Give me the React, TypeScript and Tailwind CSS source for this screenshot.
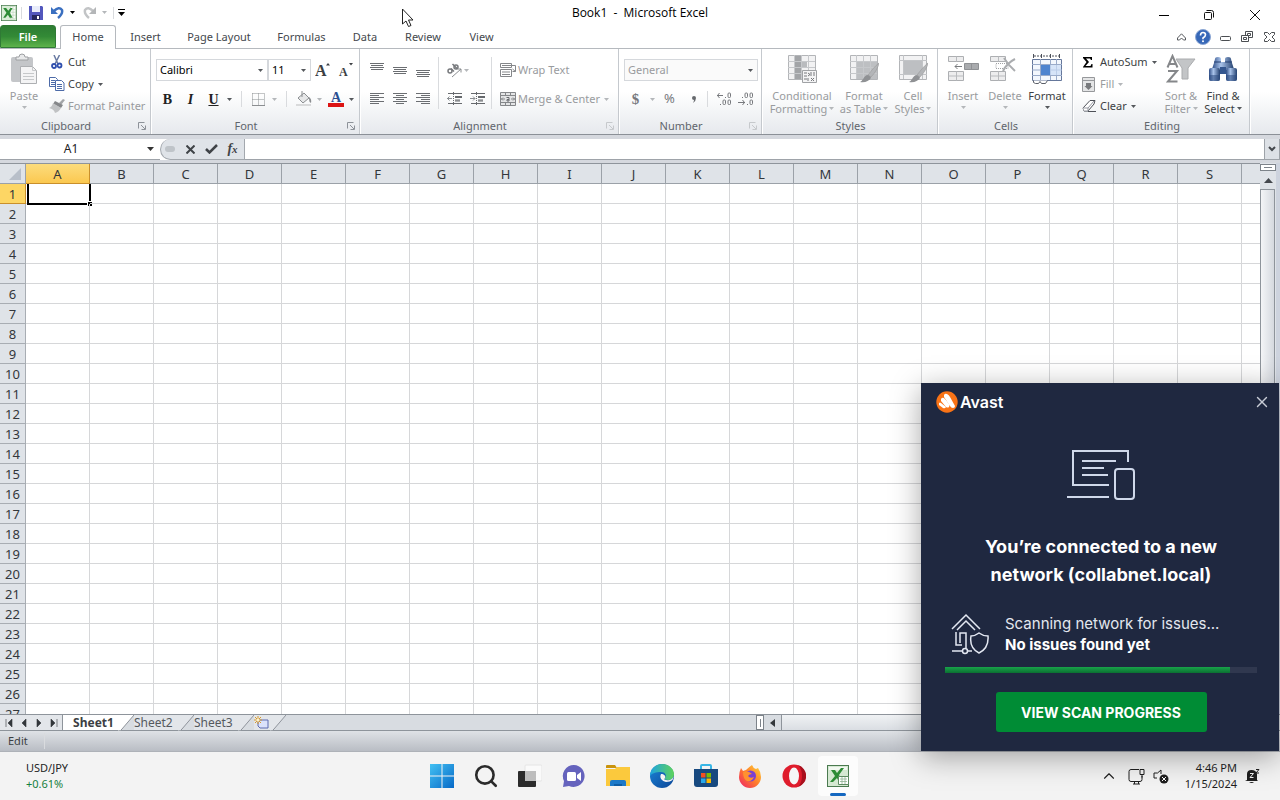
import type { ReactNode } from "react";
import { ChevronUp, Search, X } from "lucide-react";

const columns = "ABCDEFGHIJKLMNOPQRS".split("");
const rows = Array.from({ length: 27 }, (_, i) => i + 1);

function Caret({ dim = false, className = "" }: { dim?: boolean; className?: string }) {
  return (
    <svg viewBox="0 0 5 3" className={`h-[3px] w-[5px] shrink-0 ${dim ? "text-[#b4b7ba]" : "text-[#55585c]"} ${className}`}>
      <path d="M0 0h5L2.500 3z" fill="currentColor" />
    </svg>
  );
}

function Separator({ className = "h-4" }: { className?: string }) {
  return <span className={`w-px shrink-0 bg-[#d9dbde] ${className}`} />;
}

function Launcher({ dim = false }: { dim?: boolean }) {
  return (
    <svg viewBox="0 0 8 8" className={`h-2 w-2 ${dim ? "text-[#c6c9cc]" : "text-[#8d9299]"}`} fill="none" stroke="currentColor">
      <path d="M.5 6.500V.5h6M3 3l4 4M7.500 3.500v4h-4" />
    </svg>
  );
}

function Group({ label, width, launcher, dimLauncher, children }: {
  label: string;
  width: string;
  launcher?: boolean;
  dimLauncher?: boolean;
  children: ReactNode;
}) {
  return (
    <section aria-label={label} className={`flex shrink-0 flex-col border-r border-[#c5c9ce] shadow-[1px_0_0_#fff] ${width}`}>
      <div className="flex h-[69px]">{children}</div>
      <div className="flex h-4 items-center text-[11px] leading-4 text-[#5f656c]">
        <span className="flex-1 pl-0.5 text-center">{label}</span>
        {launcher ? (
          <button type="button" aria-label={`${label} settings`} className="mr-1 flex h-4 w-4 items-center justify-end">
            <Launcher dim={dimLauncher} />
          </button>
        ) : null}
      </div>
    </section>
  );
}

function LargeButton({ icon, lines, width, dim = true }: { icon: ReactNode; lines: string[]; width: string; dim?: boolean }) {
  const last = lines.length - 1;
  return (
    <button type="button" className={`flex shrink-0 flex-col items-center pt-1 text-[11px] leading-[13px] whitespace-nowrap ${width} ${dim ? "text-[#999b9e]" : "text-[#3c3f43]"}`}>
      <span className="mb-1 flex h-8 items-center">{icon}</span>
      {lines.map((line, i) => (
        <span key={line} className="flex items-center gap-0.5">
          {line}
          {last > 0 && i === last ? <Caret dim={dim} /> : null}
        </span>
      ))}
      {last === 0 ? <Caret dim={dim} className="mt-1" /> : null}
    </button>
  );
}

function SmallButton({ icon, label, dim = false, caret = false }: { icon: ReactNode; label: string; dim?: boolean; caret?: boolean }) {
  return (
    <button type="button" className={`flex h-[22px] items-center text-[11px] whitespace-nowrap ${dim ? "text-[#999b9e]" : "text-[#3c3f43]"}`}>
      <span className="flex w-[18px] shrink-0">{icon}</span>
      {label}
      {caret ? <Caret dim={dim} className="ml-1" /> : null}
    </button>
  );
}

function Tool({ label, width = "w-[23px]", children }: { label: string; width?: string; children: ReactNode }) {
  return (
    <button type="button" aria-label={label} className={`flex h-[22px] shrink-0 items-center justify-center ${width}`}>
      {children}
    </button>
  );
}

function Combo({ label, value, width, dim = false }: { label: string; value: string; width: string; dim?: boolean }) {
  return (
    <div className={`relative flex h-[22px] shrink-0 items-center ${width}`}>
      <select aria-label={label} defaultValue={value} className={`h-full w-full appearance-none border border-[#d5d8dc] pl-[3px] text-[11px] ${dim ? "bg-[#fafafa] text-[#999b9e]" : "bg-white text-black"}`}>
        <option>{value}</option>
      </select>
      <Caret className="pointer-events-none absolute right-[5px]" />
    </div>
  );
}

function Lines({ widths, align = "middle", top = 2, gap = 2 }: { widths: number[]; align?: "start" | "middle" | "end"; top?: number; gap?: number }) {
  return (
    <svg viewBox="0 0 14 14" className="h-3.5 w-3.5" fill="#6b6e72" shapeRendering="crispEdges">
      {widths.map((w, i) => (
        <rect key={i} x={align === "start" ? 0 : align === "end" ? 14 - w : (14 - w) / 2} y={top + i * gap} width={w} height="1" />
      ))}
    </svg>
  );
}

function IndentIcon({ flip = false }: { flip?: boolean }) {
  return (
    <svg viewBox="0 0 16 14" className="h-3.5 w-4" fill="none" stroke="#66696d">
      <path d="M1 1.500h14M8 4.500h7M8 5.500h7M8 8h5M8 9h5M1 11.500h14" />
      <path d={flip ? "M0 6.500h5M3 4.500l2 2-2 2" : "M5 6.500H0M2.500 4.500l-2 2 2 2"} stroke="#8b8e92" />
      <path d="M6.500 0v14" strokeDasharray="1 1" />
    </svg>
  );
}

function GridIcon({ kind }: { kind: "cond" | "table" | "cell" }) {
  return (
    <svg viewBox="0 0 30 30" className="h-[30px] w-[30px]" fill="none">
      <path d="M1.500 1.500h27v24h-27z" fill="#f2f2f3" stroke="#b3b5b8" />
      {kind === "cond" ? (
        <>
          <path d="M8 2h6v6h6v6h-6v11H8z" fill="#a2a4a7" />
          <path d="M14 8h6v5h-6z" fill="#b9bbbe" />
        </>
      ) : (
        <path d={kind === "table" ? "M8 8h20v17H8z" : "M6 7h18v13H6z"} fill="#bdbfc2" />
      )}
      {kind === "cell" ? (
        <path d="M1 6.500h28M1 20.500h28M5.500 1v24M24.500 1v24" stroke="#c2c4c7" />
      ) : (
        <path d="M1 7.500h27M1 13.500h27M1 19.500h27M7.500 1v24M14.500 1v24M21.500 1v24" stroke="#c6c8cb" />
      )}
      {kind === "cond" ? (
        <>
          <path d="M15.500 16.500h14v12h-14z" fill="#f4f4f5" stroke="#a0a2a5" />
          <path d="M17 19h3M17 22h3M17 25h3M21 19l2 1.500-2 1.500M24 18v4M27 18v4M24 24l3 3M27 24l-3 3M21 24v3" stroke="#77797c" />
        </>
      ) : (
        <>
          <path d="M30 9c-1 5-4 10-8 14l-3-2C23 16 26 12 30 9z" fill="#b3b5b8" stroke="#999" strokeWidth=".6" />
          <path d="M18 21c2 0 4 2 4 3-2 3-6 5-11 4 3-1 3-5 7-7z" fill="#8f9194" />
        </>
      )}
    </svg>
  );
}

function CellsIcon({ remove = false }: { remove?: boolean }) {
  return (
    <svg viewBox="0 0 32 30" className="h-[30px] w-8" fill="none">
      <path d="M1.500 2.500h15v5h-15zM1.500 17.500h15v9h-15z" fill="#ededee" stroke="#adafb2" />
      <path d="M9.500 2.500v5M9.500 17.500v9M1.500 22h15" stroke="#b9bbbe" />
      {remove ? (
        <>
          <path d="M7 9.500h12v5H7z" stroke="#9fa1a4" strokeDasharray="1 1" />
          <path d="M15 4q4 7 11 13M26 5Q18 9 14 17" stroke="#aaacaf" strokeWidth="2" />
        </>
      ) : (
        <>
          <path d="M17.500 9.500h14v6h-14z" fill="#a9abae" stroke="#8f9194" />
          <path d="M24.500 9.500v6" stroke="#8f9194" />
          <path d="M15 12.500H8M10.500 10L8 12.500l2.500 2.500" stroke="#797b7e" />
        </>
      )}
    </svg>
  );
}

function FormatCellsIcon() {
  return (
    <svg viewBox="0 0 32 32" className="h-8 w-8" fill="none">
      <path d="M2.500 1v4M10.500 1v4M19.500 1v4M28.500 1v4" stroke="#4b4f58" />
      <path d="M3 3h25" stroke="#4b4f58" strokeDasharray="2 1" />
      <path d="M1.500 6.500h29v21h-29z" fill="#f3f7fd" stroke="#65779b" />
      <path d="M1 11.500h30M1 22.500h30M9.500 6v21M19.500 6v21M25.500 6v21M1 17h30" stroke="#9aabc9" />
      <path d="M10 12h9v10h-9z" fill="#4e84cf" />
      <path d="M19 12h11v10H19z" fill="#c9dbf5" opacity=".7" />
      <path d="M2.500 27.500v2l2 1h3l1.500-2 1.500 2h4l2-3" stroke="#5b5f68" fill="#fff" />
    </svg>
  );
}

function Binoculars() {
  return (
    <svg viewBox="0 0 28 28" className="h-7 w-7">
      <defs>
        <linearGradient id="binocular" x1="0" x2="1">
          <stop offset="0" stopColor="#2e4d86" />
          <stop offset=".4" stopColor="#a9c3ea" />
          <stop offset="1" stopColor="#23406f" />
        </linearGradient>
      </defs>
      <path d="M6 4q0-2 3-2t3 2v3h4V4q0-2 3-2t3 2l1 4 2 6H3l2-6z" fill="url(#binocular)" />
      <path d="M11 12h6v7h-6z" fill="#34568f" />
      <rect x="0" y="13" width="11" height="13" rx="2" fill="url(#binocular)" />
      <rect x="17" y="13" width="11" height="13" rx="2" fill="url(#binocular)" />
      <path d="M0 20h11v4q0 2-2 2H2q-2 0-2-2zM17 20h11v4q0 2-2 2h-7q-2 0-2-2z" fill="#2c4a80" opacity=".55" />
      <path d="M5 7h7M16 7h7" stroke="#243f70" />
    </svg>
  );
}

function SortIcon() {
  return (
    <svg viewBox="0 0 30 30" className="h-[30px] w-[30px]" fill="none">
      <path d="M10 5h19l-7 9v11h-6V14z" fill="#c3c5c7" stroke="#aaacae" />
      <path d="M1.500 13.500L6.500 2l5 11.500M3.500 10h6" stroke="#85878a" strokeWidth="2" />
      <path d="M2 17h9L2 27.500h9.500" stroke="#85878a" strokeWidth="2" />
    </svg>
  );
}

function PasteIcon() {
  return (
    <svg viewBox="0 0 28 32" className="h-8 w-7">
      <rect x="1" y="4" width="22" height="25" rx="2" fill="#c4c6c9" />
      <path d="M6 7V4h3q0-3 3-3t3 3h3v3z" fill="#e8e9ea" stroke="#9d9fa2" />
      <path d="M10.500 13.500h12l4 4v13h-16z" fill="#f4f4f5" stroke="#adafb2" />
      <path d="M22.500 13.500v4h4M13 20.500h11M13 23.500h11M13 26.500h11" fill="none" stroke="#c6c8ca" />
    </svg>
  );
}

function CutIcon() {
  return (
    <svg viewBox="0 0 14 14" className="h-3.5 w-3.5" fill="none">
      <path d="M4 0l4 9M9.500 0L5 9" stroke="#6a7ba3" strokeWidth="1.500" />
      <circle cx="4" cy="11" r="2" stroke="#2f4fae" strokeWidth="1.800" />
      <circle cx="9.500" cy="10.500" r="2" stroke="#2f4fae" strokeWidth="1.800" />
    </svg>
  );
}

function CopyIcon() {
  return (
    <svg viewBox="0 0 16 14" className="-ml-px h-3.5 w-4" fill="#fff" stroke="#4d6ba8">
      <path d="M.5.5h6l2 2v7h-8zM2 3.500h4M2 5.500h4M2 7.500h4" />
      <path d="M6.500 3.500h6l2.500 2.500v7.500H6.500zM8 7.500h5M8 9.500h5M8 11.500h5" />
    </svg>
  );
}

function PainterIcon() {
  return (
    <svg viewBox="0 0 16 14" className="-ml-px h-3.5 w-4">
      <path d="M10 4l4-4 2 1-4 5z" fill="#a3a5a8" />
      <path d="M6 2l8 4-2 3-8-4z" fill="#85878a" />
      <path d="M4 4l8 5q-2 4-6 5-1-4-6-5 3-1 4-5z" fill="#c0c2c4" />
    </svg>
  );
}

function ExcelIcon({ className }: { className: string }) {
  return (
    <svg viewBox="0 0 22 22" className={className}>
      <rect x=".5" y=".5" width="21" height="21" fill="#d9edd6" stroke="#44784a" />
      <path d="M13 2h7v17h-7z" fill="#f8fcf7" stroke="#a3c3a2" strokeWidth=".6" />
      <path d="M13 6h7M13 10h7M13 14h7M16.500 2v17" stroke="#a3c3a2" strokeWidth=".6" />
      <path d="M3 4h4l3 4 3-4h3l-4 6.500 4 7h-4l-2.500-4L6 17.500H3l4.500-7z" fill="#2d8b35" />
    </svg>
  );
}

function NumberIcon({ up }: { up?: boolean }) {
  return (
    <svg viewBox="0 0 16 14" className="h-3.5 w-4" fill="none" stroke="#77797d">
      <path d={up ? "M1 3.500h6M3.500 1l-2 2.500 2 2.500" : "M0 10.500h7M4.500 8l2 2.500-2 2.500"} />
      <rect x="12" y={up ? 1 : 8} width="2.500" height="4.500" rx="1" />
      <rect x="7" y={up ? 8 : 1} width="2.500" height="4.500" rx="1" />
      <rect x="12" y={up ? 8 : 1} width="2.500" height="4.500" rx="1" />
      <path d={up ? "M9 5.500h1M4 12.500h1" : "M9 12.500h1M4 5.500h1"} />
    </svg>
  );
}

function TitleBar() {
  return (
    <header className="relative grid h-[25px] shrink-0 grid-cols-[1fr_auto_1fr] items-center bg-white">
      <div className="flex items-center">
        <ExcelIcon className="ml-px h-4 w-4" />
        <Separator className="ml-1 h-3 bg-[#9a9a9a]" />
        <button type="button" aria-label="Save" className="ml-[7px]">
          <svg viewBox="0 0 14 14" className="h-3.5 w-3.5">
            <path d="M0 0h13l1 1v13H0z" fill="#5257bd" />
            <path d="M3 0h8v6H3z" fill="#e8ecfa" />
            <path d="M3 9h8v5H3z" fill="#25285f" />
            <path d="M8 10h2v3H8z" fill="#fff" />
          </svg>
        </button>
        <button type="button" aria-label="Undo" className="ml-2 flex items-center gap-1.5">
          <svg viewBox="0 0 13 13" className="h-[13px] w-[13px]" fill="none">
            <path d="M3 5q5-5 8-1 1 4-4 8" stroke="#3a6fc0" strokeWidth="2.500" />
            <path d="M0 1v7h7z" fill="#3a6fc0" />
          </svg>
          <Caret className="text-black" />
        </button>
        <button type="button" aria-label="Redo" className="ml-2 flex items-center gap-1.500">
          <svg viewBox="0 0 13 13" className="mr-1.5 h-[13px] w-[13px]" fill="none">
            <path d="M10 5Q5 0 2 4q-1 4 4 8" stroke="#c2c4c6" strokeWidth="2.500" />
            <path d="M13 1v7H6z" fill="#b4b6b8" />
          </svg>
          <Caret dim />
        </button>
        <Separator className="ml-1.5 h-3 bg-[#9a9a9a]" />
        <button type="button" aria-label="Customize toolbar" className="ml-1">
          <svg viewBox="0 0 7 7" className="h-[7px] w-[7px]"><path d="M0 0h7v1H0zM0 3h7L3.500 7z" /></svg>
        </button>
      </div>
      <h1 className="font-['Open_Sans','Noto_Sans',sans-serif] text-[12px] whitespace-pre text-black">Book1  -  Microsoft Excel</h1>
      <div className="flex h-full justify-end pr-px">
        <button type="button" aria-label="Minimize" className="flex w-[45px] items-center justify-center pt-1">
          <svg viewBox="0 0 10 10" className="h-2.5 w-2.5"><path d="M0 5h10v1H0z" /></svg>
        </button>
        <button type="button" aria-label="Restore" className="flex w-[45px] items-center justify-center pt-1">
          <svg viewBox="0 0 10 10" className="h-2.5 w-2.5" fill="none" stroke="#111">
            <rect x=".5" y="2.500" width="7" height="7" rx="1" />
            <path d="M2.500.5h5q2 0 2 2v5" />
          </svg>
        </button>
        <button type="button" aria-label="Close" className="flex w-12 items-center justify-center pt-1">
          <svg viewBox="0 0 10 10" className="h-2.5 w-2.5" stroke="#111"><path d="M0 0l10 10M10 0L0 10" /></svg>
        </button>
      </div>
      <svg viewBox="0 0 12 19" className="pointer-events-none absolute top-2 left-[402px] h-[19px] w-3">
        <path d="M.5 1v15l3.500-3 2.500 5.500 2.500-1-2.500-5.500H11z" fill="#fff" stroke="#222" />
      </svg>
    </header>
  );
}

function TabRow() {
  return (
    <nav className="flex h-6 shrink-0 items-end border-b border-[#b5b9be] bg-white text-[11px] text-[#44484d]">
      <button type="button" className="h-[23px] w-14 rounded-t-[3px] border border-[#2f7a35] bg-linear-to-b from-[#2d7c33] via-[#338a36] to-[#5db34b] pt-0.5 font-semibold text-white">File</button>
      <button type="button" className="relative top-px ml-1 h-6 w-14 rounded-t-[3px] border border-b-0 border-[#b5b9be] bg-white">Home</button>
      {[
        ["Insert", "w-[59px]"], ["Page Layout", "w-[88px]"], ["Formulas", "w-[77px]"],
        ["Data", "w-[50px]"], ["Review", "w-[66px]"], ["View", "w-[51px]"],
      ].map(([name, width]) => (
        <button key={name} type="button" className={`h-[23px] pt-0.5 whitespace-nowrap ${width}`}>{name}</button>
      ))}
      <div className="ml-auto flex h-full items-center">
        <button type="button" aria-label="Collapse ribbon" className="flex w-[22px] justify-center">
          <svg viewBox="0 0 9 8" className="h-2 w-[9px]" fill="none" stroke="#55585c"><path d="M.5 5L4.500.8 8.500 5v2h-2l-2-2-2 2h-2z" /></svg>
        </button>
        <button type="button" aria-label="Help" className="flex w-[22px] justify-center">
          <svg viewBox="0 0 16 16" className="h-4 w-4">
            <circle cx="8" cy="8" r="7.500" fill="#3768b8" stroke="#8ba6d3" />
            <path d="M5.500 6.500q0-3 2.500-3t2.500 2.300Q10.500 7.500 8 9v1.200" fill="none" stroke="#fff" strokeWidth="1.600" />
            <circle cx="8" cy="12.300" r="1" fill="#fff" />
          </svg>
        </button>
        <button type="button" aria-label="Minimize workbook" className="flex w-[22px] justify-center">
          <svg viewBox="0 0 11 12" className="h-3 w-[11px]" fill="none" stroke="#4b4e52"><rect x=".5" y="5.500" width="10" height="4" rx="1" /></svg>
        </button>
        <button type="button" aria-label="Restore workbook" className="flex w-[22px] justify-center">
          <svg viewBox="0 0 12 11" className="h-[11px] w-3" fill="#fff" stroke="#4b4e52">
            <path d="M4.500.5h7v6h-7zM6.500 2.500h3v2h-3z" />
            <path d="M.5 4.500h7v6h-7zM2.500 6.500h3v2h-3z" />
          </svg>
        </button>
        <button type="button" aria-label="Close workbook" className="flex w-[22px] justify-center">
          <svg viewBox="0 0 11 10" className="h-2.5 w-[11px]" fill="none" stroke="#4b4e52">
            <path d="M.5.5h3l2 2 2-2h3v2L8 5l2.500 2.500v2h-3l-2-2-2 2h-3v-2L3 5 .5 2.500z" />
          </svg>
        </button>
      </div>
    </nav>
  );
}

function Ribbon() {
  return (
    <div className="flex h-[86px] shrink-0 overflow-hidden border-b border-[#8b9097] bg-linear-to-b from-white from-50% to-[#e6e9ed]">
      <Group label="Clipboard" width="w-[151px]" launcher>
        <LargeButton icon={<PasteIcon />} lines={["Paste"]} width="ml-0.5 w-11" />
        <div className="pt-0.5 pl-1">
          <SmallButton icon={<CutIcon />} label="Cut" />
          <SmallButton icon={<CopyIcon />} label="Copy" caret />
          <SmallButton icon={<PainterIcon />} label="Format Painter" dim />
        </div>
      </Group>

      <Group label="Font" width="w-[209px]" launcher>
        <div className="flex flex-col gap-[7px] pt-2.5 pl-[5px]">
          <div className="flex">
            <Combo label="Font name" value="Calibri" width="w-[112px]" />
            <Combo label="Font size" value="11" width="w-[43px]" />
            <Tool label="Grow font">
              <svg viewBox="0 0 16 16" className="h-4 w-4">
                <text x="0" y="14" fontSize="16" fontWeight="700" fontFamily="Liberation Serif, serif" fill="#3c3f43">A</text>
                <path d="M11 3.500h4L13 1z" fill="#3c3f43" />
              </svg>
            </Tool>
            <Tool label="Shrink font">
              <svg viewBox="0 0 16 16" className="h-4 w-4">
                <text x="1" y="14" fontSize="12" fontWeight="700" fontFamily="Liberation Serif, serif" fill="#3c3f43">A</text>
                <path d="M11 1h4l-2 2.500z" fill="#3c3f43" />
              </svg>
            </Tool>
          </div>
          <div className="flex items-center font-['Liberation_Serif',serif] text-[14px] text-[#222]">
            <Tool label="Bold"><b>B</b></Tool>
            <Tool label="Italic"><i className="font-bold">I</i></Tool>
            <Tool label="Underline"><b className="underline">U</b></Tool>
            <Tool label="Underline styles" width="w-2"><Caret /></Tool>
            <Separator className="mx-2 h-4" />
            <Tool label="Borders" width="w-4">
              <svg viewBox="0 0 13 13" className="h-[13px] w-[13px]" fill="none" stroke="#8b8e91">
                <path d="M.5.5h12v12M.5.5v12M6.500.5v12M.5 6.500h12" strokeDasharray="1 1" />
                <path d="M0 12.500h13" />
              </svg>
            </Tool>
            <Tool label="Border styles" width="w-4"><Caret dim /></Tool>
            <Separator className="ml-1 h-4" />
            <Tool label="Fill color" width="ml-2 w-[18px]">
              <svg viewBox="0 0 16 16" className="h-4 w-4">
                <path d="M2 7l6-5 5 5-6 5z" fill="#e6e7e8" stroke="#8b8e91" />
                <path d="M13 6q3 2 2 6-2-1-2-4z" fill="#8b8e91" />
                <path d="M6 0v6" stroke="#8b8e91" />
                <path d="M0 13h15v2H0z" fill="#d9dadb" />
              </svg>
            </Tool>
            <Tool label="Fill colors" width="w-3"><Caret dim /></Tool>
            <Tool label="Font color" width="ml-0.5 w-[18px]">
              <svg viewBox="0 0 16 16" className="h-4 w-4">
                <text x="3" y="11" fontSize="14" fontWeight="700" fontFamily="Liberation Serif, serif" fill="#2b4f92">A</text>
                <path d="M0 12h16v4H0z" fill="#dc1414" />
              </svg>
            </Tool>
            <Tool label="Font colors" width="w-3"><Caret /></Tool>
          </div>
        </div>
      </Group>

      <Group label="Alignment" width="w-[259px]" launcher dimLauncher>
        <div className="flex flex-col gap-[7px] pt-2.5 pl-[5px]">
          <div className="flex">
            <Tool label="Top align"><Lines widths={[14, 12, 14, 12]} top={0} /></Tool>
            <Tool label="Middle align"><Lines widths={[14, 12, 14, 12]} top={4} /></Tool>
            <Tool label="Bottom align"><Lines widths={[14, 12, 14, 12]} top={7} /></Tool>
          </div>
          <div className="flex">
            <Tool label="Align left"><Lines widths={[14, 9, 14, 9, 14, 9]} align="start" top={1} /></Tool>
            <Tool label="Center"><Lines widths={[14, 8, 14, 8, 14, 8]} top={1} /></Tool>
            <Tool label="Align right"><Lines widths={[14, 9, 14, 9, 14, 9]} align="end" top={1} /></Tool>
          </div>
        </div>
        <Separator className="mt-2 ml-1 h-[52px]" />
        <div className="flex flex-col gap-[7px] pt-2.5 pl-1">
          <Tool label="Orientation" width="w-7">
            <svg viewBox="0 0 17 17" className="h-[17px] w-[17px] shrink-0" fill="none" stroke="#77797d">
              <circle cx="4" cy="9" r="2" strokeWidth="1.500" />
              <path d="M5 6.500l3 3M6.500 2l5 5" strokeWidth="1.500" />
              <circle cx="10" cy="5" r="2" strokeWidth="1.500" />
              <path d="M6 15l9-8M11.500 7H15v3.500" stroke="#8b8e91" />
            </svg>
            <Caret dim className="ml-px" />
          </Tool>
          <div className="flex">
            <Tool label="Decrease indent"><IndentIcon /></Tool>
            <Tool label="Increase indent"><IndentIcon flip /></Tool>
          </div>
        </div>
        <Separator className="mt-2 ml-0.5 h-[52px]" />
        <div className="flex flex-col gap-[7px] pt-2.5 pl-2">
          <SmallButton
            dim
            label="Wrap Text"
            icon={
              <svg viewBox="0 0 16 16" className="h-4 w-4" fill="none" stroke="#85878a">
                <path d="M.5 1.500h11v4H.5zM.5 7.500h11v7H.5zM2 3.500h13.500v5M12.500 7l3 2.500M12.500 9.500h3V6M2 10h8M2 12.500h8" />
              </svg>
            }
          />
          <SmallButton
            dim
            caret
            label="Merge & Center"
            icon={
              <svg viewBox="0 0 16 14" className="h-3.5 w-4" fill="#e4e5e6" stroke="#85878a">
                <path d="M.5.5h15v13H.5zM.5 3.500h15M.5 10.500h15M5.500.5v3M10.500.5v3M5.500 10.500v3M10.500 10.500v3M1 7h4M11 7h4M3 5.500L1.500 7 3 8.500M13 5.500L14.500 7 13 8.500" />
                <path d="M6.500 5.500h2.500v3.500H7V7.500h2" fill="none" stroke="#66696d" />
              </svg>
            }
          />
        </div>
      </Group>

      <Group label="Number" width="w-[143px]" launcher dimLauncher>
        <div className="flex flex-col gap-[7px] pt-2.5 pl-[5px]">
          <Combo label="Number format" value="General" width="w-[134px]" dim />
          <div className="flex items-center text-[13px] text-[#77797d]">
            <Tool label="Accounting format"><b className="font-['Liberation_Serif',serif] text-[15px]">$</b></Tool>
            <Tool label="Currencies" width="w-2.5"><Caret dim /></Tool>
            <Tool label="Percent" width="w-[25px]">%</Tool>
            <Tool label="Comma style">
              <svg viewBox="0 0 4 7" className="h-[7px] w-1"><path d="M0 2q0-2 2-2t2 2q0 3-3 5Q2 5 2 4 0 4 0 2z" fill="#66696d" /></svg>
            </Tool>
            <Separator className="ml-0.5 h-4" />
            <Tool label="Increase decimal" width="ml-2 w-4"><NumberIcon up /></Tool>
            <Tool label="Decrease decimal" width="ml-1.5 w-4"><NumberIcon /></Tool>
          </div>
        </div>
      </Group>

      <Group label="Styles" width="w-[176px]">
        <LargeButton icon={<GridIcon kind="cond" />} lines={["Conditional", "Formatting"]} width="ml-[7px] w-[66px]" />
        <LargeButton icon={<GridIcon kind="table" />} lines={["Format", "as Table"]} width="w-[58px]" />
        <LargeButton icon={<GridIcon kind="cell" />} lines={["Cell", "Styles"]} width="w-10" />
      </Group>

      <Group label="Cells" width="w-[135px]">
        <LargeButton icon={<CellsIcon />} lines={["Insert"]} width="ml-1 w-[42px]" />
        <LargeButton icon={<CellsIcon remove />} lines={["Delete"]} width="w-[42px]" />
        <LargeButton icon={<FormatCellsIcon />} lines={["Format"]} width="w-[42px]" dim={false} />
      </Group>

      <Group label="Editing" width="w-[177px]">
        <div className="w-[87px] shrink-0 pt-0.5 pl-[9px]">
          <SmallButton icon={<svg viewBox="0 0 12 14" className="h-3.5 w-3"><path d="M1 2h9v3H9L8 3.500H4L7 7l-3.500 4H8.500L9.500 9h1v3.500H1V12l3.500-5L1 3z" /></svg>} label="AutoSum" caret />
          <SmallButton
            dim
            caret
            label="Fill"
            icon={
              <svg viewBox="0 0 14 15" className="h-[15px] w-3.5">
                <path d="M.5.5h12v14H.5zM.5 3.500h12" fill="#e4e5e6" stroke="#96989b" />
                <path d="M4 6h5v3h1.500l-4 4-4-4H4z" fill="#77797c" />
              </svg>
            }
          />
          <SmallButton
            caret
            label="Clear"
            icon={
              <svg viewBox="0 0 14 14" className="h-3.5 w-3.5" fill="#fff" stroke="#4d5057">
                <path d="M1 9l7-7.500h5L12 5l-6 7H2z" />
                <path d="M2 12h4V9H1M6 9l6-7" stroke="#9497a0" />
                <path d="M6 12.500h8" />
              </svg>
            }
          />
        </div>
        <LargeButton icon={<SortIcon />} lines={["Sort &", "Filter"]} width="w-[42px]" />
        <LargeButton icon={<Binoculars />} lines={["Find &", "Select"]} width="w-[42px]" dim={false} />
      </Group>
    </div>
  );
}

function FormulaBar() {
  return (
    <div className="flex h-[25px] shrink-0 border-t-4 border-[#d5d8de] bg-white">
      <div className="flex w-40 items-center border-b border-[#9ea3a9] pr-[5px]">
        <input aria-label="Name box" defaultValue="A1" className="w-full min-w-0 flex-1 pr-1 text-center text-[12px] text-[#222] outline-none" />
        <button type="button" aria-label="Names" className="p-px">
          <svg viewBox="0 0 7 4" className="h-1 w-[7px]"><path d="M0 0h7L3.500 4z" fill="#333" /></svg>
        </button>
      </div>
      <div className="flex w-[85px] items-center rounded-l-full border-r border-b border-l border-[#a3a8ae] bg-[#dfe3e8]">
        <span className="ml-1 h-1.5 w-2.5 rounded-full bg-[#bfc4c9]" />
        <button type="button" aria-label="Cancel" className="ml-[5px] flex w-[21px] justify-center">
          <svg viewBox="0 0 9 9" className="h-[9px] w-[9px]" stroke="#3f4347" strokeWidth="2"><path d="M.5.5l8 8M8.500.5l-8 8" /></svg>
        </button>
        <button type="button" aria-label="Enter" className="flex w-[21px] justify-center">
          <svg viewBox="0 0 13 10" className="h-2.5 w-[13px]" fill="none" stroke="#3f4347" strokeWidth="2.500"><path d="M1 5l3.500 3.500L12 1" /></svg>
        </button>
        <button type="button" aria-label="Insert function" className="flex w-[21px] justify-center font-['Liberation_Serif',serif] text-[14px] leading-4 font-bold text-[#3f4347] italic">
          f<span className="text-[11px]">x</span>
        </button>
      </div>
      <input aria-label="Formula" className="min-w-0 flex-1 border-b border-[#9ea3a9] px-1 text-[12px] outline-none" />
      <button type="button" aria-label="Expand formula bar" className="flex w-4 items-center justify-center border border-t-0 border-[#9ea3a9] bg-[#dde1e6]">
        <svg viewBox="0 0 8 6" className="h-1.5 w-2" fill="none" stroke="#44484d" strokeWidth="2"><path d="M1 1l3 3 3-3" /></svg>
      </button>
    </div>
  );
}

function Sheet() {
  return (
    <main className="flex min-h-0 flex-1 border-t-[3px] border-[#d5d8de] bg-white">
      <div className="min-w-0 flex-1 overflow-hidden border-t border-[#8e949b]">
        <table className="w-full table-fixed border-separate border-spacing-0 text-[#33373b]">
          <colgroup>
            <col className="w-[26px]" />
            {columns.map((c) => <col key={c} className="w-16" />)}
            <col />
          </colgroup>
          <thead>
            <tr className="h-5">
              <th className="border-r border-b border-[#9ba1a8] bg-[#dfe3e8] p-0">
                <svg viewBox="0 0 25 19" className="h-[19px] w-full"><path d="M21 4v12H9z" fill="#b8bfc9" /></svg>
              </th>
              {columns.map((c) => (
                <th key={c} scope="col" className={`border-r border-b p-0 pt-0.5 text-[13px] leading-[17px] font-normal ${c === "A" ? "border-[#c98f2b] bg-linear-to-b from-[#fcdc7c] to-[#fbc84f]" : "border-[#9ba1a8] bg-[#dfe3e8]"}`}>{c}</th>
              ))}
              <td className="border-b border-[#9ba1a8] bg-[#dfe3e8] p-0" />
            </tr>
          </thead>
          <tbody>
            {rows.map((r) => (
              <tr key={r} className="h-5">
                <th scope="row" className={`border-r border-b p-0 pt-0.5 text-[13px] leading-[17px] font-normal ${r === 1 ? "border-[#c98f2b] bg-[#fdd664]" : "border-[#a8adb3] bg-[#dfe3e8]"}`}>{r}</th>
                {columns.map((c) => (
                  <td key={c} className="relative border-r border-b border-[#d6d7d9] p-0">
                    {r === 1 && c === "A" ? (
                      <>
                        <input aria-label="Cell A1" className="absolute -inset-x-px top-0 ml-0.5 h-[21px] w-16 border-x-2 border-b-2 border-black bg-white px-px outline-none" />
                        <span className="absolute -right-[3px] -bottom-[3px] h-[5px] w-[5px] border-t border-l border-white bg-black" />
                      </>
                    ) : null}
                  </td>
                ))}
                <td className="border-b border-[#d6d7d9] p-0" />
              </tr>
            ))}
          </tbody>
        </table>
      </div>
      <div className="flex w-5 flex-col border-r-4 border-[#cdd3de] bg-[#dfe3e8]">
        <div className="mt-px flex h-[7px] items-center justify-center border border-[#7d838a] bg-white"><span className="h-px w-2 bg-[#7d838a]" /></div>
        <button type="button" aria-label="Scroll up" className="flex h-[18px] items-center justify-center">
          <svg viewBox="0 0 9 5" className="h-[5px] w-[9px]"><path d="M0 5h9L4.500 0z" fill="#44484d" /></svg>
        </button>
        <div className="mr-px flex-1 border border-[#8e949b] bg-linear-to-r from-[#f4f5f7] to-[#d5d9df]" />
        <div className="h-40" />
      </div>
    </main>
  );
}

function Slash({ active = false }: { active?: boolean }) {
  return (
    <svg viewBox="0 0 16 16" className="h-4 w-4 shrink-0">
      <path d="M0 0h16L4 14l-2 2H0z" fill={active ? "#fff" : "#e3e6ea"} />
      <path d="M16 0L4 14q-1 2-4 2" fill="none" stroke="#8e949b" />
    </svg>
  );
}

function SheetTabs() {
  return (
    <div className="flex h-[17px] shrink-0 border-y border-[#8e949b] bg-[#d8dce1]">
      <div className="flex w-[63px] shrink-0 items-center gap-px border-r border-[#8e949b] bg-[#e3e6ea] pl-0.5">
        {[
          ["First sheet", "M1 0v8M7 0v8L3 4z"], ["Previous sheet", "M6 0v8L2 4z"],
          ["Next sheet", "M2 0v8l4-4z"], ["Last sheet", "M7 0v8M1 0v8l4-4z"],
        ].map(([name, d]) => (
          <button key={name} type="button" aria-label={name} className="flex w-3.5 justify-center">
            <svg viewBox="0 0 8 8" className="h-2 w-2"><path d={d} fill="#33373b" stroke="#33373b" strokeWidth=".6" /></svg>
          </button>
        ))}
      </div>
      <button type="button" className="w-[55px] shrink-0 bg-white pl-1.5 text-[12px] leading-[15px] font-bold whitespace-nowrap text-[#3c3f43]">Sheet1</button>
      <Slash active />
      {["Sheet2", "Sheet3"].map((name) => (
        <div key={name} className="flex">
          <button type="button" className="w-11 bg-[#e3e6ea] text-left text-[12px] leading-[15px] text-[#55595e]">{name}</button>
          <Slash />
        </div>
      ))}
      <button type="button" aria-label="New sheet" className="flex w-4 shrink-0 items-center bg-[#e3e6ea]">
        <svg viewBox="0 0 15 13" className="h-[13px] w-[15px]">
          <path d="M4 4h10v8H6l-2-2z" fill="#dbe2fb" stroke="#5d6bb0" />
          <path d="M4 0v8M0 4h8M1 1l6 6M7 1L1 7" stroke="#d99a2b" />
          <circle cx="4" cy="4" r="1.500" fill="#fff3c9" />
        </svg>
      </button>
      <Slash />
      <div className="ml-auto flex w-[524px] shrink-0">
        <span className="flex w-2 items-center justify-center border border-[#7d838a] bg-white"><span className="h-2 w-px bg-[#7d838a]" /></span>
        <button type="button" aria-label="Scroll left" className="flex w-[17px] items-center justify-center">
          <svg viewBox="0 0 5 8" className="h-2 w-[5px]"><path d="M5 0v8L0 4z" fill="#33373b" /></svg>
        </button>
        <div className="mr-10 flex-1 border-x border-[#8e949b] bg-linear-to-b from-[#f0f2f4] to-[#dadee3]" />
      </div>
    </div>
  );
}

function AvastPopup() {
  return (
    <aside className="absolute right-px bottom-[49px] w-[358px] bg-[#1f2840] font-['Inter','Open_Sans',sans-serif] text-white shadow-[0_6px_28px_rgba(0,0,0,0.35)]">
      <div className="flex h-[38px] items-center pr-2 pl-[15px]">
        <svg viewBox="0 0 22 22" className="h-[22px] w-[22px]">
          <circle cx="11" cy="11" r="10.700" fill="#f97316" />
          <path d="M8 4q1-2 3-1 2 1 3 3l5 9q0 2-2 2-2 0-3-2L8 6z" fill="#fff" />
          <path d="M5 8q1-2 3-1 2 2 5 6 1 2 0 3-1 1-3 0L5 10z" fill="#fff" />
          <path d="M3 12q1-1 2 0l5 4q-1 2-3 1l-4-3z" fill="#fff" />
        </svg>
        <span className="ml-0.5 text-[16px] font-semibold">Avast</span>
        <button type="button" aria-label="Close notification" className="ml-auto text-[#c8ccd6]"><X className="h-[18px] w-[18px]" strokeWidth={1.800} /></button>
      </div>
      <svg viewBox="0 0 70 52" className="mx-auto mt-7 h-[52px] w-[70px]" fill="none" stroke="#cfd8ea" strokeWidth="2">
        <path d="M44 36H8V2h55v11M17 12h34M17 19h22M17 26h26M2 48h42" />
        <rect x="50" y="20" width="19" height="30" rx="3" />
      </svg>
      <h2 className="mt-8 pl-0.5 text-center text-[18px] leading-7 font-bold">
        You’re connected to a new
        <br />
        network (collabnet.local)
      </h2>
      <div className="mt-6 flex items-center px-[30px]">
        <svg viewBox="0 0 38 42" className="h-[42px] w-[38px] shrink-0" fill="none" stroke="#e3e8f2" strokeWidth="1.500">
          <path d="M1 16L15 2l14 14M6 17l9-9 9 9M5 19v13h6M9 30V20h6v12M15 22v13M1 38h10M17 38h4" />
          <circle cx="14" cy="38" r="2.500" />
          <path d="M28 20q4 3 9 3 1 12-9 17-10-5-8-17 4 0 8-3z" />
        </svg>
        <div className="ml-4 text-[15px] leading-[21px] whitespace-nowrap">
          <p className="text-[#e3e7ef]">Scanning network for issues...</p>
          <p className="font-bold">No issues found yet</p>
        </div>
      </div>
      <div role="progressbar" aria-label="Network scan" aria-valuenow={91} className="mr-[22px] ml-6 mt-3 h-1.5 bg-[#30384f]">
        <div className="h-full bg-linear-to-b from-[#18a44a] to-[#0b7032]" style={{ width: "91.500%" }} />
      </div>
      <div className="flex justify-center pt-[19px] pb-[19px] pl-0.5">
        <button type="button" className="h-10 w-[211px] rounded-[3px] bg-[#008c35] text-[14px] font-bold">VIEW SCAN PROGRESS</button>
      </div>
    </aside>
  );
}

function TaskIcon({ name }: { name: string }) {
  switch (name) {
    case "Start":
      return (
        <svg viewBox="0 0 24 24" className="h-6 w-6">
          <defs><linearGradient id="win" x2="1" y2="1"><stop stopColor="#43c1f3" /><stop offset="1" stopColor="#0669c7" /></linearGradient></defs>
          <path d="M0 0h11.500v11.500H0zM12.500 0H24v11.500H12.500zM0 12.500h11.500V24H0zM12.500 12.500H24V24H12.500z" fill="url(#win)" />
        </svg>
      );
    case "Search":
      return <Search className="h-[26px] w-[26px] text-[#2a2a2a]" strokeWidth={2.400} />;
    case "Task view":
      return (
        <svg viewBox="0 0 24 24" className="h-6 w-6">
          <rect x="7" y="1" width="17" height="16" rx="1" fill="#fafafa" stroke="#e4e4e4" />
          <rect y="7" width="18" height="16" rx="1" fill="#2b2b2b" />
          <path d="M7 7h11v10H7z" fill="#bdbdbd" />
        </svg>
      );
    case "Chat":
      return (
        <svg viewBox="0 0 24 24" className="h-6 w-6">
          <path d="M12 1a11 11 0 1 1-5 21l-6 1 1-6A11 11 0 0 1 12 1z" fill="#6563bd" />
          <rect x="5" y="8" width="9" height="9" rx="1.500" fill="#fff" />
          <path d="M15 11l4-3v9l-4-3z" fill="#fff" />
        </svg>
      );
    case "File Explorer":
      return (
        <svg viewBox="0 0 24 24" className="h-6 w-6">
          <path d="M0 2q0-1 1-1h8l2 3H0z" fill="#c9930d" />
          <path d="M0 5h9l2-2h13v19H0z" fill="#fbc93d" />
          <path d="M4 22v-4q0-2 2-2h12q2 0 2 2v4z" fill="#1b78c8" />
          <path d="M8 20h8v2H8z" fill="#0e5ca3" />
        </svg>
      );
    case "Edge":
      return (
        <svg viewBox="0 0 24 24" className="h-6 w-6">
          <defs>
            <linearGradient id="edge-top" x2="1"><stop stopColor="#1ea4e0" /><stop offset="1" stopColor="#5ed35a" /></linearGradient>
            <linearGradient id="edge-base" x2="1" y2="1"><stop stopColor="#1a86d8" /><stop offset="1" stopColor="#0c4597" /></linearGradient>
          </defs>
          <circle cx="12" cy="12" r="12" fill="url(#edge-base)" />
          <path d="M0 11C1 4 6 0 12 0c7 0 12 5 12 10 0 4-3 6-6 6s-4-1-3-2c2-3 0-6-4-6C6 8 2 9 0 12z" fill="url(#edge-top)" />
          <path d="M11 10c-2 4 1 7 5 8 3 0 5-1 6.500-2L24 12c-2 4-5 5-8 4-2 0-2-1-1-2 1-2-1-4-4-4z" fill="#f3f3f3" />
        </svg>
      );
    case "Store":
      return (
        <svg viewBox="0 0 24 24" className="h-6 w-6">
          <path d="M7 6V2q0-1 1-1h8q1 0 1 1v4" fill="none" stroke="#38b6e6" strokeWidth="2" />
          <path d="M0 5h24v15q0 3-3 3H3q-3 0-3-3z" fill="#17497f" />
          <path d="M7 9h4.500v4.500H7z" fill="#f25022" />
          <path d="M12.500 9H17v4.500h-4.500z" fill="#7fba00" />
          <path d="M7 14.500h4.500V19H7z" fill="#28a8ea" />
          <path d="M12.500 14.500H17V19h-4.500z" fill="#ffb900" />
        </svg>
      );
    case "Firefox":
      return (
        <svg viewBox="0 0 24 24" className="h-6 w-6">
          <defs><linearGradient id="fox" x1="1" x2="0" y2="1"><stop stopColor="#ffd836" /><stop offset=".5" stopColor="#ff7a2c" /><stop offset="1" stopColor="#ec1f6b" /></linearGradient></defs>
          <path d="M3 4l2 3 3-1Q11 3 14 1q1 3 4 4l2-1q3 4 3 9a11 11 0 0 1-22 0q0-5 2-9z" fill="url(#fox)" />
          <circle cx="12.500" cy="12" r="5.500" fill="#7b3fd1" />
          <path d="M5 8q5-2 9 2-3 0-4 2 2 3 6 1-2 5-7 4-4-2-4-9z" fill="#ff9130" />
        </svg>
      );
    case "Opera":
      return (
        <svg viewBox="0 0 24 24" className="h-6 w-6">
          <circle cx="12" cy="12" r="11.500" fill="#df1c2c" />
          <path d="M16 1a11.500 11.500 0 0 1 0 22q4-4 4-11T16 1z" fill="#a9101d" />
          <ellipse cx="12" cy="12" rx="5" ry="8.500" fill="#f6f6f6" />
        </svg>
      );
    default:
      return (
        <svg viewBox="0 0 22 22" className="h-[22px] w-[22px]">
          <rect x=".5" y=".5" width="21" height="21" fill="#d5e8d2" stroke="#4b7a50" />
          <path d="M2 2h18v3H2z" fill="#f2f8f1" />
          <path d="M4 5h4l2 3 4-5h3l-5 7 4 7h-4l-2-4-4 4H3l5-6z" fill="#2d8b35" />
          <path d="M11.500 11.500h10v8h-10z" fill="#fff" stroke="#5d8a61" />
          <path d="M13 14h7M13 16.500h7M15 12v7M18 12v7" stroke="#8fb392" strokeWidth=".8" />
        </svg>
      );
  }
}

function Taskbar() {
  const apps = ["Start", "Search", "Task view", "Chat", "File Explorer", "Edge", "Store", "Firefox", "Opera", "Excel"];
  return (
    <footer className="grid h-12 shrink-0 grid-cols-[1fr_auto_1fr] items-center bg-[#f3f3f3] text-[11px] leading-4 text-[#1f1f1f]">
      <button type="button" className="justify-self-start pl-[26px] text-left">
        <span className="block">USD/JPY</span>
        <span className="block text-[#15803d]">+0.61%</span>
      </button>
      <div className="flex">
        {apps.map((name) => (
          <button key={name} type="button" aria-label={name} className="flex w-11 justify-center">
            <span className={`relative flex h-10 w-10 items-center justify-center rounded ${name === "Excel" ? "bg-[#fcfcfc]" : ""}`}>
              <TaskIcon name={name} />
              {name === "Excel" ? <span className="absolute bottom-0 h-[3px] w-4 rounded-full bg-[#1467c0]" /> : null}
            </span>
          </button>
        ))}
      </div>
      <div className="flex items-center justify-end pr-5">
        <button type="button" aria-label="Hidden icons"><ChevronUp className="h-[18px] w-[18px]" strokeWidth={1.500} /></button>
        <button type="button" aria-label="Network" className="ml-2.5">
          <svg viewBox="0 0 17 17" className="h-[17px] w-[17px]" fill="none" stroke="#1f1f1f">
            <path d="M11 1.500H3q-2 0-2 2v8q0 2 2 2h9q2 0 2-2V8M5 16h7M6.500 13.500V16M10.500 13.500V16" />
            <path d="M12 1.500h4v5h-4zM14 6.500v3" />
          </svg>
        </button>
        <button type="button" aria-label="Volume muted" className="ml-2">
          <svg viewBox="0 0 16 16" className="h-4 w-4">
            <path d="M8 2L4.500 5H1v5h3M8 2v4" fill="none" stroke="#1f1f1f" />
            <circle cx="11" cy="11" r="4.500" fill="#1f1f1f" />
            <path d="M9 9l4 4M13 9l-4 4" stroke="#fff" />
          </svg>
        </button>
        <button type="button" className="ml-3 w-[56px] text-right whitespace-nowrap">
          <span className="block">4:46 PM</span>
          <span className="block">1/15/2024</span>
        </button>
        <button type="button" aria-label="Notifications" className="ml-2">
          <svg viewBox="0 0 15 16" className="h-4 w-[15px]">
            <path d="M2 12V6q0-4 4.500-4T12 6v6l1 1H0zM4 14h5q-2 2-5 0z" fill="#1f1f1f" />
            <path d="M5 5.500h3.500l-3.500 4h3.500" fill="none" stroke="#f3f3f3" />
            <path d="M11 1.500h3l-3 3.500h3" fill="none" stroke="#1f1f1f" />
          </svg>
        </button>
      </div>
    </footer>
  );
}

export default function App() {
  return (
    <div className="relative flex h-screen flex-col overflow-hidden bg-white font-['Noto_Sans','Open_Sans',sans-serif]">
      <TitleBar />
      <TabRow />
      <Ribbon />
      <FormulaBar />
      <Sheet />
      <SheetTabs />
      <div className="flex h-[21px] shrink-0 items-center border-b border-[#aeb2b8] bg-linear-to-b from-[#dfe2e6] to-[#b9bdc4] pl-2 text-[11px] text-[#3c3f43]">
        Edit
        <Separator className="ml-4 h-4 bg-[#8e949b]" />
      </div>
      <Taskbar />
      <AvastPopup />
    </div>
  );
}
